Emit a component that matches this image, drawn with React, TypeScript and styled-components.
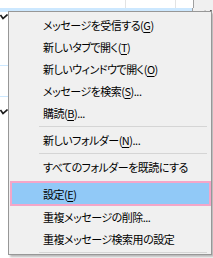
import React from 'react';
import styled, { createGlobalStyle } from 'styled-components';

const GlobalStyle = createGlobalStyle`
  html, body {
    margin: 0;
    padding: 0;
    background: #ffffff;
  }
  body {
    font-family: "Noto Sans CJK JP", "Noto Sans", sans-serif;
  }
`;

const Screen = styled.div`
  position: relative;
  width: 213px;
  height: 258px;
  overflow: hidden;
  background: #ffffff;
  display: flex;
  flex-direction: column;
`;

const TopRow = styled.div`
  display: flex;
  height: 8px;
  flex: none;
`;

const HeaderCell = styled.div<{ $w: number; $line?: boolean }>`
  width: ${p => p.$w}px;
  flex: none;
  background: #ffffff;
  border-right: ${p => (p.$line ? '1px solid #e3e3e3' : 'none')};
`;

const SidePanel = styled.div`
  flex: 1;
  background: #f0f0f0;
  border-left: 1px solid #a0a0a0;
  position: relative;
`;

const SelectedBand = styled.div`
  display: flex;
  height: 4px;
  flex: none;
`;

const BandFill = styled.div`
  width: 192px;
  background: #cce8ff;
`;

const BandRest = styled.div`
  flex: 1;
  background: #f0f0f0;
  border-left: 1px solid #a0a0a0;
`;

const Body = styled.div`
  flex: 1;
  display: flex;
  flex-direction: column;
  width: 8px;
`;

const TreeRow = styled.div<{ $h: number; $line?: boolean }>`
  height: ${p => p.$h}px;
  flex: none;
  display: flex;
  align-items: center;
  border-bottom: ${p => (p.$line ? '1px solid #cce8ff' : 'none')};
`;

const Chevron = () => (
  <svg width="8" height="6" viewBox="0 0 8 6">
    <polyline points="0.5,1 3,4.5 7.5,0.5" fill="none" stroke="#1a1a1a" strokeWidth="1.6" />
  </svg>
);

const CornerChevron = styled.div`
  position: absolute;
  right: 1px;
  top: -3px;
`;

const Menu = styled.div`
  position: absolute;
  left: 8px;
  top: 11px;
  width: 201px;
  padding: 2px 0 0 1px;
  background: #f0f0f0;
  border: 1px solid #979797;
  box-shadow: 2px 2px 2px rgba(0, 0, 0, 0.28);
  display: flex;
  flex-direction: column;
`;

const Item = styled.div<{ $active?: boolean }>`
  box-sizing: border-box;
  flex: none;
  height: ${p => (p.$active ? 25 : 22)}px;
  margin-top: ${p => (p.$active ? 3 : 0)}px;
  display: flex;
  align-items: center;
  padding-left: ${p => (p.$active ? 31 : 33)}px;
  font-size: 11px;
  letter-spacing: -0.5px;
  color: #000000;
  font-feature-settings: "palt";
  white-space: nowrap;
  background: ${p => (p.$active ? '#91c9f7' : 'transparent')};
  border: ${p => (p.$active ? '2px solid #f4a6c8' : 'none')};
  u {
    text-decoration: underline;
    text-underline-offset: 2px;
  }
`;

const Separator = styled.div<{ $h?: number }>`
  flex: none;
  height: ${p => p.$h ?? 5}px;
  display: flex;
  align-items: center;
  padding-left: 29px;
  padding-right: 4px;
  &::after {
    content: '';
    flex: 1;
    height: 1px;
    background: #d5d5d5;
  }
`;

type Entry =
  | { kind: 'sep'; h?: number }
  | { kind: 'item'; label: string; key?: string; tail?: string; active?: boolean };

const entries: Entry[] = [
  { kind: 'item', label: 'メッセージを受信する(', key: 'G', tail: ')' },
  { kind: 'item', label: '新しいタブで開く(', key: 'T', tail: ')' },
  { kind: 'item', label: '新しいウィンドウで開く(', key: 'O', tail: ')' },
  { kind: 'item', label: 'メッセージを検索(', key: 'S', tail: ')...' },
  { kind: 'item', label: '購読(', key: 'B', tail: ')...' },
  { kind: 'sep' },
  { kind: 'item', label: '新しいフォルダー(', key: 'N', tail: ')...' },
  { kind: 'sep' },
  { kind: 'item', label: 'すべてのフォルダーを既読にする' },
  { kind: 'item', label: '設定(', key: 'E', tail: ')', active: true },
  { kind: 'item', label: '重複メッセージの削除...' },
  { kind: 'item', label: '重複メッセージ検索用の設定' },
  { kind: 'sep', h: 4 },
];

export default function App() {
  return (
    <>
      <GlobalStyle />
      <Screen>
        <TopRow>
          <HeaderCell $w={125} $line />
          <HeaderCell $w={49} $line />
          <HeaderCell $w={17} />
          <SidePanel>
            <CornerChevron><Chevron /></CornerChevron>
          </SidePanel>
        </TopRow>
        <SelectedBand>
          <BandFill />
          <BandRest />
        </SelectedBand>
        <Body>
          <TreeRow $h={9}><Chevron /></TreeRow>
          <TreeRow $h={44} $line />
          <TreeRow $h={30} $line />
          <TreeRow $h={29}><Chevron /></TreeRow>
        </Body>
        <Menu>
          {entries.map((e, i) =>
            e.kind === 'sep' ? (
              <Separator key={i} $h={e.h} />
            ) : (
              <Item key={i} $active={e.active}>
                {e.label}
                {e.key && <u>{e.key}</u>}
                {e.tail}
              </Item>
            )
          )}
        </Menu>
      </Screen>
    </>
  );
}
